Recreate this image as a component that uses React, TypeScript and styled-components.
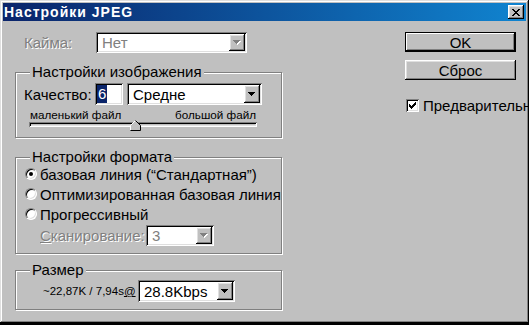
import React from 'react';
import styled, { createGlobalStyle, css } from 'styled-components';

const GlobalStyle = createGlobalStyle`
  html, body { margin: 0; padding: 0; background: #000; overflow: hidden; }
  body { font-family: "Liberation Sans", Arial, sans-serif; }
`;

const raised = css`
  box-shadow: inset -1px -1px 0 #000, inset 1px 1px 0 #fff, inset -2px -2px 0 #808080,
    inset 2px 2px 0 #dfdfdf;
`;
const sunken = css`
  box-shadow: inset 1px 1px 0 #808080, inset -1px -1px 0 #fff, inset 2px 2px 0 #000,
    inset -2px -2px 0 #dfdfdf;
`;
const disabledText = css`
  color: #808080;
  text-shadow: 1px 1px 0 #fff;
`;

const Window = styled.div`
  width: 529px;
  height: 323px;
  box-sizing: border-box;
  padding: 3px;
  background: #c0c0c0;
  box-shadow: inset -1px -1px 0 #000, inset 1px 1px 0 #dfdfdf, inset -2px -2px 0 #808080,
    inset 2px 2px 0 #fff;
  font-size: 15px;
  color: #000;
`;

const TitleBar = styled.div`
  height: 18px;
  display: flex;
  align-items: center;
  justify-content: space-between;
  padding: 0 2px 0 1px;
  background: linear-gradient(90deg, #0a246a, #1084d0);
`;
const Title = styled.span`
  font-weight: bold;
  font-size: 14px;
  letter-spacing: 1px;
  color: #fff;
`;
const CloseButton = styled.span`
  width: 16px;
  height: 14px;
  display: flex;
  align-items: center;
  justify-content: center;
  background: #c0c0c0;
  ${raised}
`;

const Body = styled.div`
  display: flex;
  align-items: flex-start;
  padding: 11px 0 0 12px;
`;
const LeftColumn = styled.div`
  width: 267px;
  display: flex;
  flex-direction: column;
`;
const RightColumn = styled.div`
  width: 111px;
  margin-left: 123px;
  display: flex;
  flex-direction: column;
`;

const FieldRow = styled.div<{ $pad: number; $h?: number }>`
  display: flex;
  align-items: center;
  padding-left: ${(p) => p.$pad}px;
  ${(p) => p.$h && `height: ${p.$h}px;`}
`;
const Label = styled.span<{ $w: number; $disabled?: boolean }>`
  width: ${(p) => p.$w}px;
  flex: none;
  white-space: nowrap;
  ${(p) => p.$disabled && disabledText}
`;
const Accel = styled.span`
  text-decoration: underline;
`;

const Group = styled.fieldset<{ $top: number }>`
  margin: ${(p) => p.$top}px 0 0;
  padding: 0;
  min-width: 0;
  border: 1px solid #808080;
  box-shadow: inset 1px 1px 0 #fff, 1px 1px 0 #fff;
`;
const Legend = styled.legend`
  margin-left: 14px;
  padding: 0 2px;
  line-height: 14px;
  background: #c0c0c0;
`;
const GroupBody = styled.div<{ $pad: string }>`
  padding: ${(p) => p.$pad};
  display: flex;
  flex-direction: column;
`;

const Combo = styled.div<{ $w: number; $h: number }>`
  width: ${(p) => p.$w}px;
  height: ${(p) => p.$h}px;
  flex: none;
  box-sizing: border-box;
  padding: 2px;
  display: flex;
  background: #fff;
  ${sunken}
`;
const ComboText = styled.span<{ $disabled?: boolean }>`
  flex: 1;
  display: flex;
  align-items: center;
  padding-left: 4px;
  white-space: nowrap;
  color: ${(p) => (p.$disabled ? '#808080' : '#000')};
`;
const ComboButton = styled.span`
  width: 16px;
  display: flex;
  align-items: center;
  justify-content: center;
  background: #c0c0c0;
  ${raised}
`;

const TextInput = styled.div`
  width: 28px;
  height: 22px;
  flex: none;
  box-sizing: border-box;
  padding: 2px;
  margin-right: 4px;
  background: #fff;
  ${sunken}
`;
const Selection = styled.span`
  display: inline-block;
  line-height: 18px;
  padding: 0 1px;
  background: #0a246a;
  color: #fff;
`;

const ScaleLabels = styled.div`
  display: flex;
  justify-content: space-between;
  width: 226px;
  margin: 4px 0 0 14px;
  font-size: 11.7px;
  line-height: 12px;
  white-space: nowrap;
`;
const Slider = styled.div`
  position: relative;
  width: 228px;
  height: 10px;
  margin-left: 13px;
`;
const Track = styled.div`
  height: 5px;
  margin-top: 1px;
  background: #c0c0c0;
  ${sunken}
`;
const Thumb = styled.svg`
  position: absolute;
  top: -1px;
  left: 101px;
`;

const RadioRow = styled.div`
  height: 20px;
  display: flex;
  align-items: center;
  gap: 3px;
  white-space: nowrap;
`;
const RadioCircle = styled.span<{ $checked?: boolean }>`
  width: 12px;
  height: 12px;
  flex: none;
  box-sizing: border-box;
  border-radius: 50%;
  border: 1px solid;
  border-color: #808080 #fff #fff #808080;
  background: #fff;
  box-shadow: inset 1px 1px 0 #000, inset -1px -1px 0 #dfdfdf;
  display: flex;
  align-items: center;
  justify-content: center;
  &::after {
    content: '';
    width: 4px;
    height: 4px;
    border-radius: 50%;
    background: ${(p) => (p.$checked ? '#000' : 'transparent')};
  }
`;

const SizeText = styled.span`
  font-size: 11.5px;
  width: 95px;
  flex: none;
  white-space: nowrap;
`;

const PushButton = styled.div<{ $default?: boolean; $top: number }>`
  height: 20px;
  margin-top: ${(p) => p.$top}px;
  display: flex;
  align-items: center;
  justify-content: center;
  background: #c0c0c0;
  ${(p) =>
    p.$default
      ? css`
          box-shadow: inset 0 0 0 1px #000, inset -2px -2px 0 #000, inset 2px 2px 0 #fff,
            inset -3px -3px 0 #808080;
        `
      : raised}
`;
const CheckRow = styled.div`
  display: flex;
  align-items: center;
  gap: 4px;
  margin: 17px 0 0 1px;
  white-space: nowrap;
`;
const CheckBox = styled.span`
  width: 13px;
  height: 13px;
  flex: none;
  box-sizing: border-box;
  display: flex;
  align-items: center;
  justify-content: center;
  background: #fff;
  ${sunken}
`;

const Arrow: React.FC<{ disabled?: boolean }> = ({ disabled }) => {
  const d = 'M0 0h7v1H0z M1 1h5v1H1z M2 2h3v1H2z M3 3h1v1H3z';
  return (
    <svg width="8" height="5" viewBox="0 0 8 5" shapeRendering="crispEdges">
      {disabled && <path d={d} fill="#fff" transform="translate(1 1)" />}
      <path d={d} fill={disabled ? '#808080' : '#000'} />
    </svg>
  );
};

const Select: React.FC<{ w: number; h: number; value: string; disabled?: boolean }> = ({
  w,
  h,
  value,
  disabled,
}) => (
  <Combo $w={w} $h={h}>
    <ComboText $disabled={disabled}>{value}</ComboText>
    <ComboButton>
      <Arrow disabled={disabled} />
    </ComboButton>
  </Combo>
);

const formats = [
  { text: 'базовая линия (“Стандартная”)', checked: true },
  { text: 'Оптимизированная базовая линия', checked: false },
  { text: 'Прогрессивный', checked: false },
];

const App: React.FC = () => (
  <>
    <GlobalStyle />
    <Window>
      <TitleBar>
        <Title>Настройки JPEG</Title>
        <CloseButton>
          <svg width="8" height="7" viewBox="0 0 8 7" shapeRendering="crispEdges">
            <path
              d="M0 0h2v1H0z M6 0h2v1H6z M1 1h2v1H1z M5 1h2v1H5z M2 2h4v1H2z M3 3h2v1H3z M2 4h4v1H2z M1 5h2v1H1z M5 5h2v1H5z M0 6h2v1H0z M6 6h2v1H6z"
              fill="#000"
            />
          </svg>
        </CloseButton>
      </TitleBar>
      <Body>
        <LeftColumn>
          <FieldRow $pad={9}>
            <Label $w={72} $disabled>
              Кайма:
            </Label>
            <Select w={151} h={21} value="Нет" disabled />
          </FieldRow>

          <Group $top={12}>
            <Legend>Настройки изображения</Legend>
            <GroupBody $pad="4px 0 6px 0">
              <FieldRow $pad={8}>
                <Label $w={71}>Качество:</Label>
                <TextInput>
                  <Selection>6</Selection>
                </TextInput>
                <Select w={135} h={22} value="Средне" />
              </FieldRow>
              <ScaleLabels>
                <span>маленький файл</span>
                <span>большой файл</span>
              </ScaleLabels>
              <Slider>
                <Track />
                <Thumb width="11" height="11" viewBox="0 0 11 11">
                  <polygon points="5.5,0.5 10.5,5.5 10.5,10.5 0.5,10.5 0.5,5.5" fill="#c0c0c0" />
                  <polyline points="0.5,10 0.5,5.5 5.5,0.5" fill="none" stroke="#fff" />
                  <polyline points="5.5,0.5 10.5,5.5 10.5,10.5 0.5,10.5" fill="none" stroke="#000" />
                </Thumb>
              </Slider>
            </GroupBody>
          </Group>

          <Group $top={12}>
            <Legend>Настройки формата</Legend>
            <GroupBody $pad="0 0 6px 9px">
              {formats.map((f) => (
                <RadioRow key={f.text}>
                  <RadioCircle $checked={f.checked} />
                  {f.text}
                </RadioRow>
              ))}
              <FieldRow $pad={15} $h={23}>
                <Label $w={106} $disabled>
                  <Accel>С</Accel>канирование:
                </Label>
                <Select w={68} h={21} value="3" disabled />
              </FieldRow>
            </GroupBody>
          </Group>

          <Group $top={9}>
            <Legend>Размер</Legend>
            <GroupBody $pad="3px 0 7px 0">
              <FieldRow $pad={27}>
                <SizeText>
                  ~22,87K / 7,94s<Accel>@</Accel>
                </SizeText>
                <Select w={97} h={22} value="28.8Kbps" />
              </FieldRow>
            </GroupBody>
          </Group>
        </LeftColumn>

        <RightColumn>
          <PushButton $default $top={0}>
            OK
          </PushButton>
          <PushButton $top={8}>Сброс</PushButton>
          <CheckRow>
            <CheckBox>
              <svg width="7" height="7" viewBox="0 0 7 7" shapeRendering="crispEdges">
                <path
                  d="M6 0h1v1H6z M5 1h2v1H5z M0 2h1v1H0z M4 2h3v1H4z M0 3h2v1H0z M3 3h3v1H3z M0 4h5v1H0z M1 5h3v1H1z M2 6h1v1H2z"
                  fill="#000"
                />
              </svg>
            </CheckBox>
            Предварительный просмотр
          </CheckRow>
        </RightColumn>
      </Body>
    </Window>
  </>
);

export default App;
